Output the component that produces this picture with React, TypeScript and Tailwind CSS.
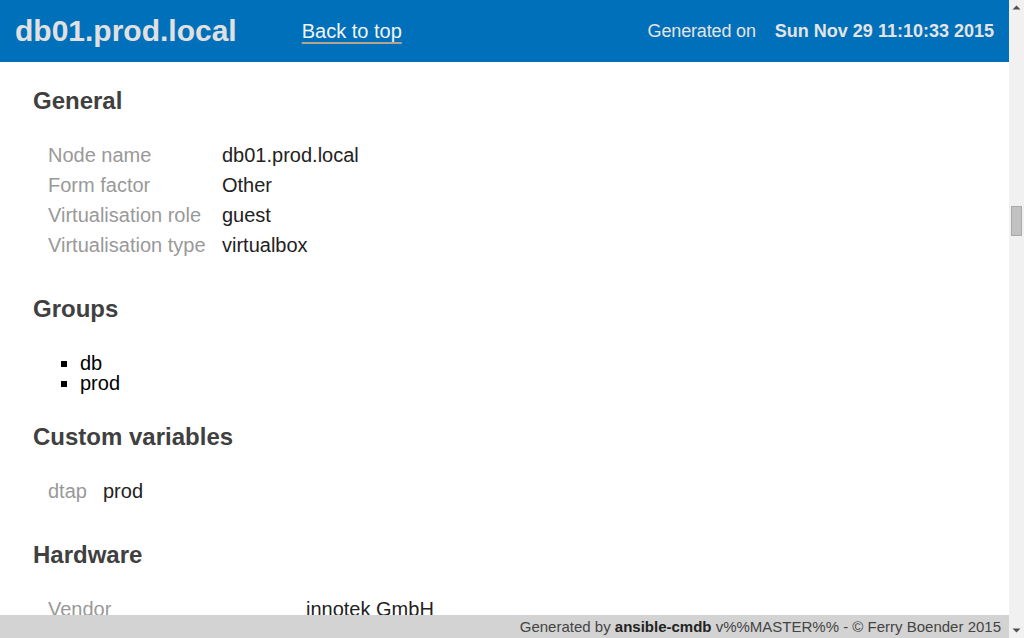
import React from "react";

const general: [string, string][] = [
  ["Node name", "db01.prod.local"],
  ["Form factor", "Other"],
  ["Virtualisation role", "guest"],
  ["Virtualisation type", "virtualbox"],
];

const KeyTable = ({ rows, keyWidth }: { rows: [string, string][]; keyWidth: string }) => (
  <table className="ml-[15px] border-collapse">
    <tbody>
      {rows.map(([k, v]) => (
        <tr key={k} className="h-[30px]">
          <td className={`${keyWidth} p-0 align-middle text-[#999999]`}>{k}</td>
          <td className="p-0 align-middle text-[#222222]">{v}</td>
        </tr>
      ))}
    </tbody>
  </table>
);

const Heading = ({ children, className }: { children: React.ReactNode; className: string }) => (
  <h2 className={`text-[24px] font-bold leading-[28px] text-[#404040] ${className}`}>{children}</h2>
);

export default function App() {
  return (
    <div className="flex h-[638px] w-[1024px] overflow-hidden bg-white font-['Liberation_Sans',Arial,sans-serif]">
      <div className="flex min-w-0 flex-1 flex-col">
        {/* header */}
        <header className="flex h-[62px] shrink-0 items-center bg-[#0070ba] px-[15px]">
          <h1 className="text-[30px] font-bold leading-none text-[#e0e0e0]">db01.prod.local</h1>
          <a
            href="#"
            className="ml-[65px] text-[20px] leading-none text-[#f4f4f4] underline decoration-[#b8a48c] underline-offset-[4px]"
          >
            Back to top
          </a>
          <div className="ml-auto flex items-center text-[18px] leading-none text-[#e4e4e4]">
            <span className="tracking-[-0.15px]">Generated on</span>
            <span className="ml-[19px] font-bold">Sun Nov 29 11:10:33 2015</span>
          </div>
        </header>

        {/* content */}
        <main className="min-h-0 flex-1 overflow-hidden px-[33px] text-[20px] leading-[30px]">
          <Heading className="mt-[25px]">General</Heading>
          <div className="mt-[25px]">
            <KeyTable rows={general} keyWidth="w-[174px]" />
          </div>

          <Heading className="mt-[35px]">Groups</Heading>
          <ul className="mt-[30px] list-[square] pl-[47px] leading-[20px] text-black">
            <li>db</li>
            <li>prod</li>
          </ul>

          <Heading className="mt-[30px]">Custom variables</Heading>
          <div className="mt-[25px]">
            <KeyTable rows={[["dtap", "prod"]]} keyWidth="w-[55px]" />
          </div>

          <Heading className="mt-[35px]">Hardware</Heading>
          <div className="mt-[25px]">
            <KeyTable rows={[["Vendor", "innotek GmbH"]]} keyWidth="w-[258px]" />
          </div>
        </main>

        {/* footer */}
        <footer className="flex h-[23px] shrink-0 items-center justify-end bg-[#d3d3d3] pr-[8px] text-[15px] leading-none text-[#444444]">
          <span>
            Generated by <b className="text-[#222222]">ansible-cmdb</b> v%%MASTER%% - © Ferry Boender 2015
          </span>
        </footer>
      </div>

      {/* scrollbar */}
      <div className="flex w-[15px] shrink-0 flex-col items-center bg-[#f1f1f1]">
        <svg width="15" height="15" viewBox="0 0 15 15" className="shrink-0">
          <path d="M3.5 9.5 L7.5 5.5 L11.5 9.5 Z" fill="#505050" />
        </svg>
        <div className="mt-[191px] h-[30px] w-[11px] border border-[#a9a9a9] bg-[#c1c1c1]" />
        <div className="flex-1" />
        <svg width="15" height="15" viewBox="0 0 15 15" className="shrink-0">
          <path d="M3.5 5.5 L7.5 9.5 L11.5 5.5 Z" fill="#505050" />
        </svg>
      </div>
    </div>
  );
}
